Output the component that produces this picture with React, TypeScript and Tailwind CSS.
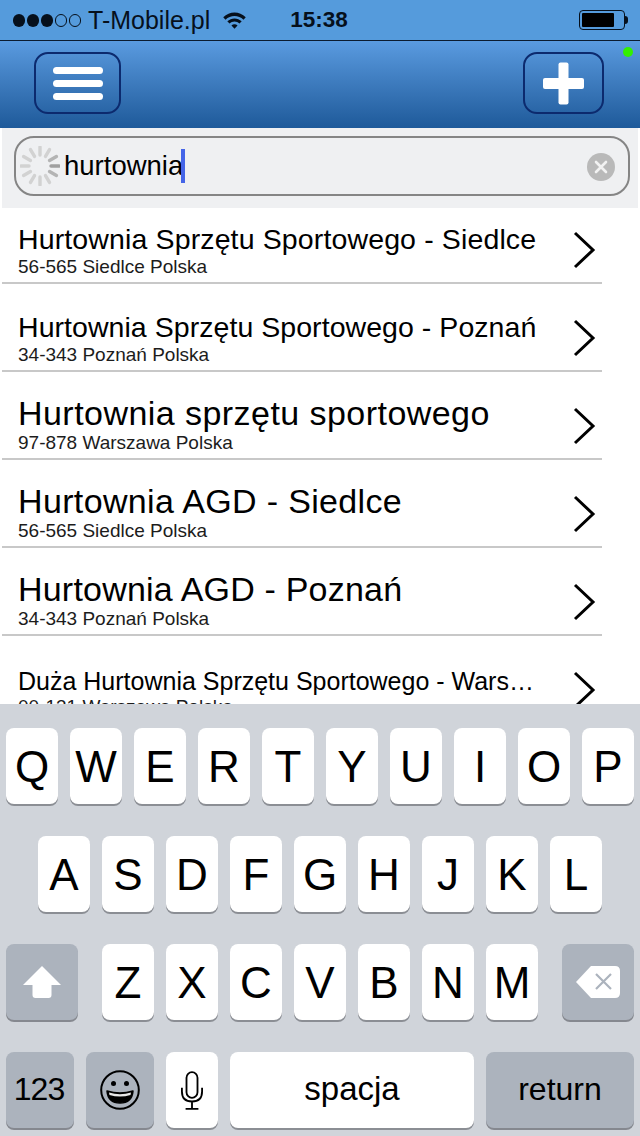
const results = [
  { title: 'Hurtownia Sprzętu Sportowego - Siedlce', address: '56-565 Siedlce Polska', size: 'text-[28.5px] leading-[34px] tracking-[0.13px]' },
  { title: 'Hurtownia Sprzętu Sportowego - Poznań', address: '34-343 Poznań Polska', size: 'text-[28.5px] leading-[34px] tracking-[0.05px]' },
  { title: 'Hurtownia sprzętu sportowego', address: '97-878 Warszawa Polska', size: 'text-[34px] leading-[38px] tracking-[0.45px]' },
  { title: 'Hurtownia AGD - Siedlce', address: '56-565 Siedlce Polska', size: 'text-[34px] leading-[38px] tracking-[0.35px]' },
  { title: 'Hurtownia AGD - Poznań', address: '34-343 Poznań Polska', size: 'text-[34px] leading-[38px] tracking-[0.2px]' },
  { title: 'Duża Hurtownia Sprzętu Sportowego - Wars…', address: '00-131 Warszawa Polska', size: 'text-[25px] leading-[30px]' },
];

const rows = ['QWERTYUIOP', 'ASDFGHJKL', 'ZXCVBNM'];

function Spinner() {
  const spokes = Array.from({ length: 12 }, (_, i) => i);
  return (
    <svg width="40" height="40" viewBox="-20 -20 40 40" className="shrink-0">
      {spokes.map((i) => (
        <line
          key={i}
          x1="0"
          y1="-11"
          x2="0"
          y2="-19"
          stroke={i === 3 ? '#a0a0a0' : i === 2 || i === 4 ? '#b4b4b4' : '#d2d2d2'}
          strokeWidth="3.4"
          strokeLinecap="round"
          transform={`rotate(${i * 30})`}
        />
      ))}
    </svg>
  );
}

function Key({ label }: { label: string }) {
  return (
    <div className="flex h-[76px] w-[52px] items-center justify-center rounded-[8px] bg-white pt-[2px] text-[44px] text-black shadow-[0_2px_0_#8b8e94]">
      {label}
    </div>
  );
}

function DarkKey({ className, children }: { className: string; children: React.ReactNode }) {
  return (
    <div className={`flex h-[76px] items-center justify-center rounded-[8px] bg-[#acb3bd] shadow-[0_2px_0_#85888f] ${className}`}>
      {children}
    </div>
  );
}

export default function App() {
  return (
    <div className="flex h-[1136px] w-[640px] flex-col overflow-hidden bg-white font-['Liberation_Sans',sans-serif] text-black">
      <div className="flex h-[41px] shrink-0 items-center border-b border-b-[#0b1c30] bg-[#559bdc] pl-[13px] pr-[12px]">
        <div className="flex w-[68px] items-center gap-[2px]">
          {[0, 1, 2].map((i) => (
            <span key={i} className="h-[13px] w-[13px] rounded-full bg-[#06101c]" />
          ))}
          {[3, 4].map((i) => (
            <span key={i} className="h-[13px] w-[13px] rounded-full border border-[#06101c]" />
          ))}
        </div>
        <span className="ml-[7px] text-[25px] leading-none text-[#06101c]">T-Mobile.pl</span>
        <svg width="25" height="18" viewBox="0 0 26 20" className="ml-[12px] mt-[-1px]">
          <path d="M0.5 7 C7.5 0 18.5 0 25.5 7 L23 9.6 C17.5 4.2 8.5 4.2 3 9.6Z" fill="#06101c" />
          <path d="M5 11.5 C9.5 7.2 16.5 7.2 21 11.5 L18.6 14 C15.5 11 10.5 11 7.4 14Z" fill="#06101c" />
          <path d="M9.6 16 C11.5 14.4 14.5 14.4 16.4 16 L13 19.6Z" fill="#06101c" />
        </svg>
        <span className="ml-[43px] text-[22.5px] font-bold leading-none text-[#06101c]">15:38</span>
        <div className="ml-auto flex items-center">
          <div className="h-[20px] w-[46px] rounded-[4px] border border-[#06101c] p-[2px]">
            <div className="h-full w-[32px] rounded-[1px] bg-black" />
          </div>
          <div className="h-[8px] w-[3px] rounded-r-full bg-[#06101c]" />
        </div>
      </div>

      <div className="relative flex h-[87px] shrink-0 items-start justify-between bg-gradient-to-b from-[#5a9be0] to-[#1e5a9a] pl-[34px] pr-[36px] pt-[11px]">
        <div className="flex h-[62px] w-[87px] flex-col items-center justify-center gap-[6px] rounded-[14px] border-2 border-[#0c2a6e]">
          <span className="h-[7px] w-[50px] rounded-full bg-white" />
          <span className="h-[7px] w-[50px] rounded-full bg-white" />
          <span className="h-[7px] w-[50px] rounded-full bg-white" />
        </div>
        <div className="flex h-[62px] w-[81px] items-center justify-center rounded-[14px] border-2 border-[#0c2a6e]">
          <svg width="41" height="43" viewBox="0 0 41 43">
            <rect x="15.500" y="0.500" width="10" height="42" rx="2" fill="#ffffff" />
            <rect x="0" y="16" width="41" height="11" rx="2" fill="#ffffff" />
          </svg>
        </div>
        <span className="absolute right-[7px] top-[6px] h-[10px] w-[10px] rounded-full bg-[#33f000]" />
      </div>

      <div className="ml-[2px] mr-[2px] h-[80px] shrink-0 bg-[#eff0f2] pl-[12px] pr-[8px] pt-[8px]">
        <div className="flex h-[60px] items-center rounded-[20px] border-2 border-[#858585] pl-[4px] pr-[13px]">
          <Spinner />
          <span className="ml-[4px] text-[27.5px] leading-none">hurtownia</span>
          <span className="ml-[-2px] h-[34px] w-[4px] bg-[#4565e8]" />
          <div className="ml-auto mt-[2px] flex h-[28px] w-[28px] items-center justify-center rounded-full bg-[#b9b9b9]">
            <svg width="14" height="14" viewBox="0 0 14 14">
              <path d="M2 2 L12 12 M12 2 L2 12" stroke="#f2f2f2" strokeWidth="2.6" strokeLinecap="round" />
            </svg>
          </div>
        </div>
      </div>

      <div className="h-[496px] shrink-0 overflow-hidden">
        {results.map((r) => (
          <div key={r.title} className="relative ml-[2px] h-[88px] w-[600px]">
            <div className="flex h-[74px] flex-col justify-end pl-[16px] pb-[4px]">
              <div className={`whitespace-nowrap ${r.size}`}>{r.title}</div>
              <div className="text-[19px] leading-[22px] text-[#1c1c1c]">{r.address}</div>
            </div>
            <div className="h-[2px] bg-[#c8c8c8]" />
            <svg width="24" height="38" viewBox="0 0 24 38" className="absolute left-[571px] top-[23px]">
              <path d="M2 2 L20 19 L2 36" fill="none" stroke="#000000" strokeWidth="3" />
            </svg>
          </div>
        ))}
      </div>

      <div className="flex h-[432px] shrink-0 flex-col gap-[32px] bg-[#d0d4da] pt-[24px]">
        <div className="flex justify-center gap-[12px]">
          {rows[0].split('').map((k) => (
            <Key key={k} label={k} />
          ))}
        </div>
        <div className="flex justify-center gap-[12px]">
          {rows[1].split('').map((k) => (
            <Key key={k} label={k} />
          ))}
        </div>
        <div className="flex justify-between px-[6px]">
          <DarkKey className="w-[72px]">
            <svg width="38" height="32" viewBox="0 0 38 32">
              <path d="M19 0 L38 19 L28.500 19 L28.500 29 Q28.500 32 25.500 32 L12.500 32 Q9.500 32 9.500 29 L9.500 19 L0 19Z" fill="#ffffff" />
            </svg>
          </DarkKey>
          <div className="flex gap-[12px]">
            {rows[2].split('').map((k) => (
              <Key key={k} label={k} />
            ))}
          </div>
          <DarkKey className="w-[72px]">
            <svg width="44" height="32" viewBox="0 0 44 32">
              <path d="M15 0 L39 0 Q44 0 44 5 L44 27 Q44 32 39 32 L15 32 L0 16Z" fill="#ffffff" />
              <path d="M20 8 L35 23 M35 8 L20 23" stroke="#acb3bd" strokeWidth="2.2" />
            </svg>
          </DarkKey>
        </div>
        <div className="flex gap-[12px] px-[6px]">
          <DarkKey className="w-[68px] pb-[2px] pr-[2px] text-[32px] tracking-[-1px]">123</DarkKey>
          <DarkKey className="w-[68px]">
            <svg width="40" height="40" viewBox="0 0 40 40">
              <circle cx="20" cy="20" r="18.800" fill="none" stroke="#000000" strokeWidth="2" />
              <circle cx="13.500" cy="13.500" r="2.500" fill="#000000" />
              <circle cx="26.500" cy="13.500" r="2.500" fill="#000000" />
              <path d="M7 21 Q20 25 33 21 Q32 33 20 33 Q8 33 7 21Z" fill="#000000" stroke="#000000" strokeWidth="1.500" strokeLinejoin="round" />
              <path d="M9 22.500 Q20 26 31 22.500 L30.500 25 Q20 28 9.500 25Z" fill="#e8e8e8" />
            </svg>
          </DarkKey>
          <div className="flex h-[76px] w-[52px] items-center justify-center rounded-[8px] bg-white shadow-[0_2px_0_#8b8e94]">
            <svg width="22" height="39" viewBox="0 0 24 42" fill="none" stroke="#000000" strokeWidth="2">
              <rect x="6" y="1" width="12" height="28" rx="6" />
              <path d="M1 18 L1 22 Q1 33 12 33 Q23 33 23 22 L23 18 M12 33 L12 41 M5 41 L19 41" />
            </svg>
          </div>
          <div className="flex h-[76px] w-[244px] items-center justify-center rounded-[8px] bg-white pb-[2px] text-[33px] shadow-[0_2px_0_#8b8e94]">
            spacja
          </div>
          <DarkKey className="w-[148px] pb-[2px] text-[32px]">return</DarkKey>
        </div>
      </div>
    </div>
  );
}
